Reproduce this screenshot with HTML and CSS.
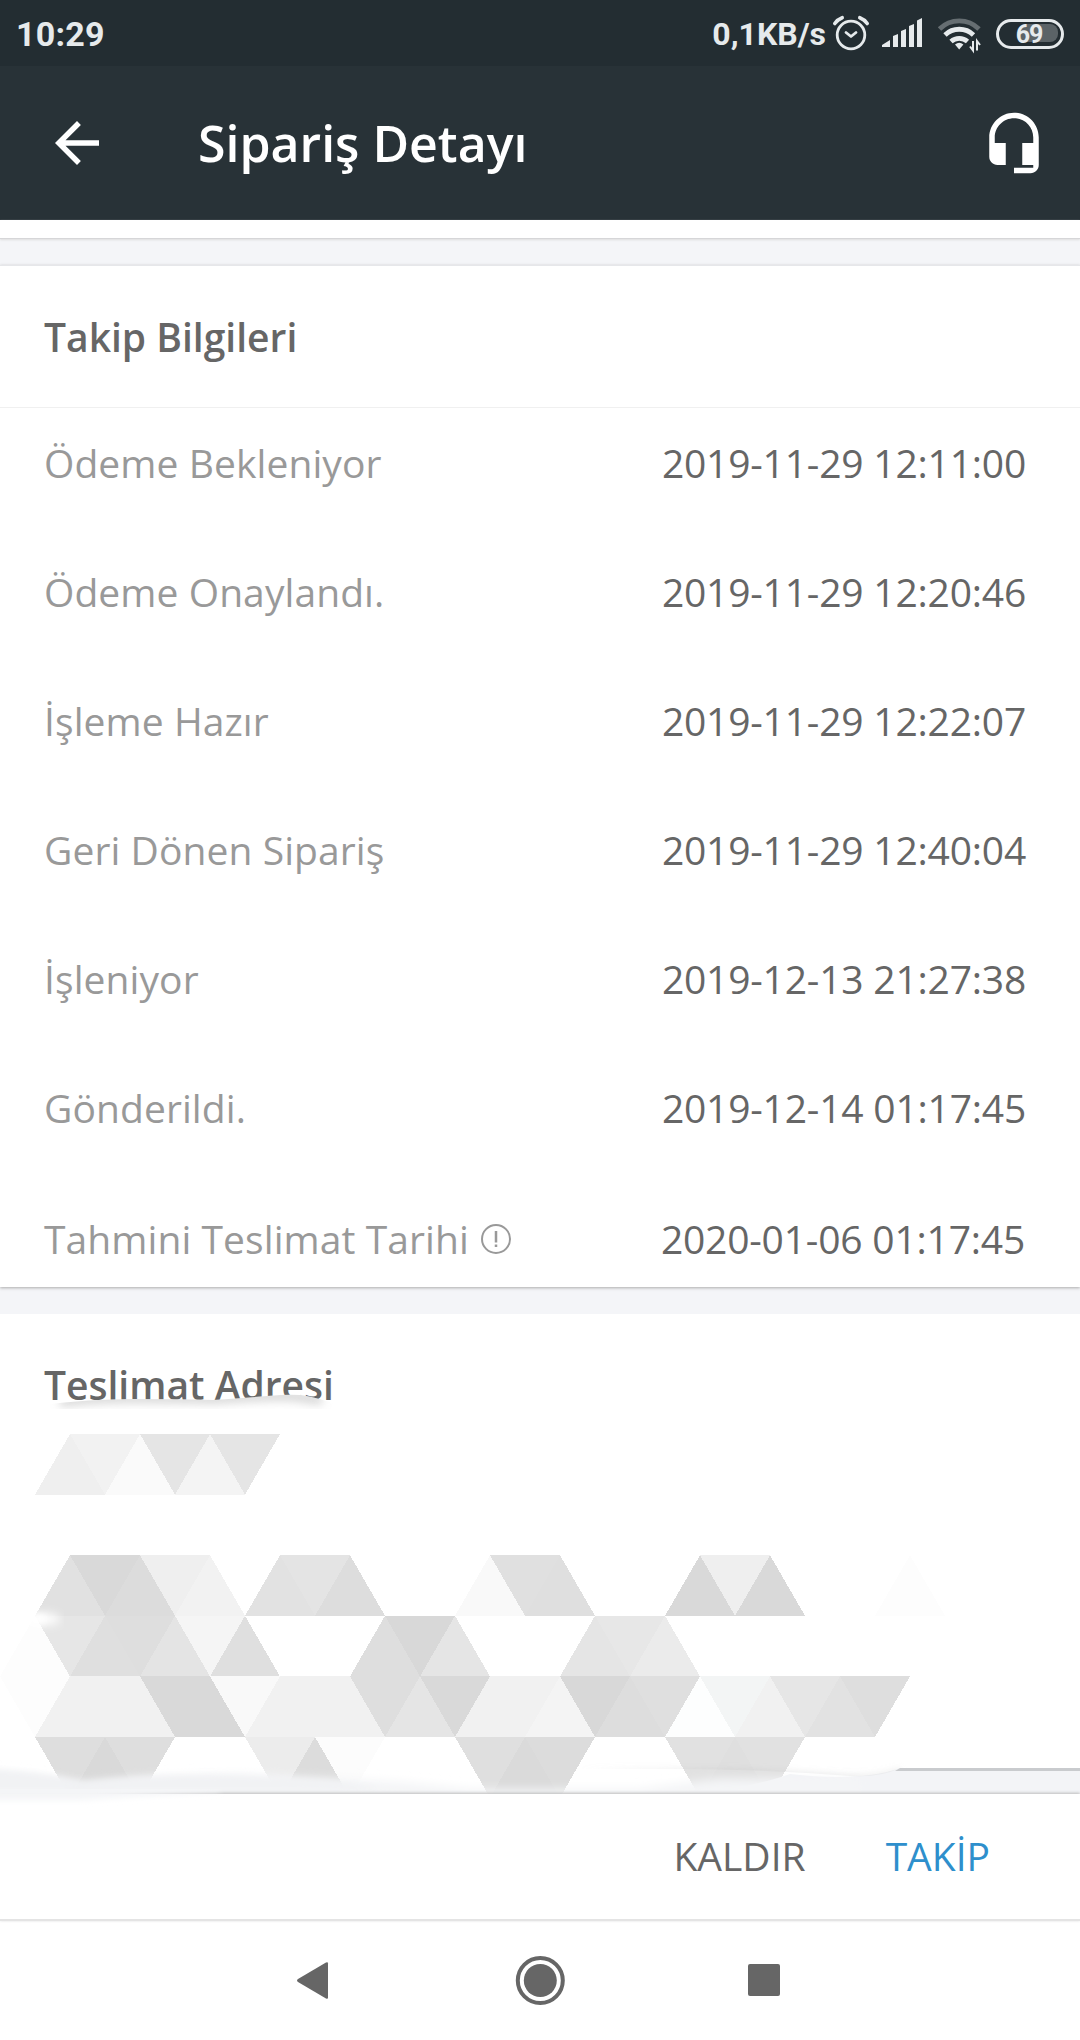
FILE: index.html
```html
<!DOCTYPE html>
<html lang="tr">
  <head>
    <meta charset="UTF-8" />
    <meta name="viewport" content="width=device-width, initial-scale=1.0" />
    <title>Sipariş Detayı</title>
    <link rel="stylesheet" href="styles.css">
  </head>
  <body>
    <div class="status">
      <span class="clock">10:29</span>
      <span class="speed">0,1KB/s</span>
      <svg class="status-icons" width="228" height="40" viewBox="832 14 228 40">
        <!-- alarm -->
        <g fill="none" stroke="#e6eaec" stroke-width="2.8" stroke-linecap="round">
          <circle cx="851" cy="35" r="13.8" />
          <path d="M846 32.5l5 4 5-4" stroke-linejoin="round" />
          <path d="M834.8 23.5q3-4.2 7.4-5.8M867.2 23.5q-3-4.2-7.4-5.8" stroke-width="3.6" />
        </g>
        <!-- signal -->
        <path fill="#e6eaec" d="M882 47v-2l8-5v7zM893 36l5-2v13h-5zM901 31l5-2v18h-5zM909 26l5-2v23h-5zM917 20.500l5-2.500v29h-5z" />
        <!-- wifi -->
        <g fill="none" stroke="#e6eaec" stroke-width="4.800">
          <path d="M939.500 29a28 28 0 0 1 39.500 0" stroke="#666e72" />
          <path d="M945 35a20.500 20.500 0 0 1 28.500 0" />
          <path d="M951 41.500a12.500 12.500 0 0 1 16.500 0" />
        </g>
        <path fill="#e6eaec" d="M955 44.500q4.200-3.500 8.400 0l-4.200 5z" />
        <path d="M973 41v9.500l-3-4M977 50.500V41l3 4" fill="none" stroke="#e6eaec" stroke-width="2" />
        <!-- battery -->
        <rect x="1019" y="24" width="39" height="18" rx="8" fill="#5b6367" />
      </svg>
      <span class="battery">69</span>
    </div>

    <header class="toolbar">
      <svg width="66" height="66" viewBox="0 0 24 24">
        <path fill="#fff" d="M20 11H7.830l5.590-5.590L12 4l-8 8 8 8 1.410-1.410L7.830 13H20v-2z" />
      </svg>
      <h1>Sipariş Detayı</h1>
      <svg width="66" height="66" viewBox="0 0 24 24">
        <path fill="#fff" d="M12 1c-4.970 0-9 4.030-9 9v7c0 1.660 1.340 3 3 3h3v-8H5v-2c0-3.870 3.130-7 7-7s7 3.130 7 7v2h-4v8h4v1h-7v2h6c1.660 0 3-1.340 3-3V10c0-4.970-4.030-9-9-9z" />
      </svg>
    </header>

    <div class="card-end"></div>

    <section class="card tracking">
      <h2>Takip Bilgileri</h2>
      <ul>
        <li><span>Ödeme Bekleniyor</span><time>2019-11-29 12:11:00</time></li>
        <li><span>Ödeme Onaylandı.</span><time>2019-11-29 12:20:46</time></li>
        <li><span>İşleme Hazır</span><time>2019-11-29 12:22:07</time></li>
        <li><span>Geri Dönen Sipariş</span><time>2019-11-29 12:40:04</time></li>
        <li><span>İşleniyor</span><time>2019-12-13 21:27:38</time></li>
        <li><span>Gönderildi.</span><time>2019-12-14 01:17:45</time></li>
        <li class="estimate">
          <span>Tahmini Teslimat Tarihi</span>
          <svg width="30" height="30" viewBox="0 0 30 30">
            <circle cx="15" cy="15" r="14" fill="none" stroke="#999" stroke-width="2" />
            <path d="M15 7v11.500M15 20.500v2.500" stroke="#999" stroke-width="2.500" />
          </svg>
          <time>2020-01-06 01:17:45</time>
        </li>
      </ul>
    </section>

    <section class="address">
      <h2>Teslimat Adresi</h2>
      <svg class="mosaic" width="1080" height="480" viewBox="0 1314 1080 480">
        <defs>
          <filter id="soft" x="-10%" y="-100%" width="120%" height="300%"><feGaussianBlur stdDeviation="5" /></filter>
          <filter id="haze" x="-10%" y="-100%" width="120%" height="300%"><feGaussianBlur stdDeviation="3" /></filter>
          <clipPath id="tear"><path d="M40 1405Q90 1399 133 1399T213 1400Q245 1398 267 1396T300 1395T336 1404V1430H40z" /></clipPath>
          <clipPath id="lip"><path d="M540 1740H1080V1768H900Q880 1778 850 1776Q760 1769 680 1769T540 1769z" /></clipPath>
          <linearGradient id="fade" gradientUnits="userSpaceOnUse" x1="580" x2="905" y1="0" y2="0">
            <stop offset="0" stop-color="#bbb" stop-opacity="0" />
            <stop offset="0.5" stop-color="#bbb" stop-opacity="0.45" />
            <stop offset="1" stop-color="#ccc" stop-opacity="0.4" />
          </linearGradient>
        </defs>
        <!-- torn edge under the heading -->
        <g clip-path="url(#tear)">
          <rect x="40" y="1390" width="300" height="40" fill="#fff" />
          <path fill="none" stroke="#a8a8a8" stroke-width="9" stroke-opacity="0.5" filter="url(#soft)" d="M60 1402Q90 1398 133 1398T213 1399Q245 1397 267 1396T300 1397T322 1400" />
        </g>
        <g id="tiles" shape-rendering="crispEdges"></g>
        <ellipse cx="43" cy="1619" rx="17" ry="6" fill="#fff" filter="url(#soft)" />
        <ellipse cx="38" cy="1619" rx="8" ry="5" fill="#fff" filter="url(#haze)" />
        <!-- worn lower edge of the card -->
        <path fill="#f3f4f7" d="M900 1768H1080V1794H700Q760 1785 790 1774Q860 1782 900 1768z" />
        <path fill="#f4f5f7" filter="url(#soft)" d="M-60 1769Q30 1771 75 1784Q150 1774 240 1774L400 1782L470 1789H640L720 1778L860 1779V1810H-60z" />
        <path fill="#f1f2f4" filter="url(#haze)" d="M-60 1768Q40 1770 85 1782Q170 1773 260 1777T380 1790H-60z" />
        <g clip-path="url(#lip)">
          <path fill="none" stroke="url(#fade)" stroke-width="4" filter="url(#haze)" d="M580 1771Q760 1770 850 1777Q880 1778 900 1770" />
        </g>
        <path fill="#c9cbce" d="M900 1768H1080V1771H895z" />
      </svg>
    </section>

    <footer class="actions">
      <svg class="smudge" width="260" height="30">
        <path fill="#fff" filter="url(#haze)" d="M-20 14H130L215 10V18H-20z" />
        <path fill="#f4f5f7" filter="url(#haze)" d="M-20-10H220V2L140 7L80 11H-20z" />
      </svg>
      <a>KALDIR</a>
      <a class="primary">TAKİP</a>
    </footer>

    <nav class="navbar">
      <svg width="1080" height="119" viewBox="0 1921 1080 119" fill="#666">
        <path d="M298 1979l28-16.500q2-1 2 1v34q0 2-2 1l-28-16.500q-2-1.500 0-3z" />
        <circle cx="540.300" cy="1980.500" r="16.500" />
        <circle cx="540.300" cy="1980.500" r="22.500" fill="none" stroke="#666" stroke-width="4" />
        <rect x="748" y="1964" width="32" height="32" rx="2" />
      </svg>
    </nav>

    <script src="mosaic.js"></script>
  </body>
</html>
```
FILE: mosaic.js
```js
const SIDE = 35;
const ROW = 60.6;

// [row, column, shade]; a triangle spans two columns
const tiles = [
  [0, 1, "#efefef"], [0, 2, "#f2f2f2"], [0, 3, "#fafafa"], [0, 4, "#e5e5e5"], [0, 5, "#f4f4f4"], [0, 6, "#e5e5e5"],
  [2, 1, "#e1e1e1"], [2, 2, "#d9d9d9"], [2, 3, "#dcdcdc"], [2, 4, "#efefef"], [2, 5, "#f2f2f2"],
  [2, 7, "#e2e2e2"], [2, 8, "#e4e4e4"], [2, 9, "#dddddd"],
  [2, 13, "#f9f9f9"], [2, 14, "#e0e0e0"], [2, 15, "#dfdfdf"],
  [2, 19, "#d9d9d9"], [2, 20, "#efefef"], [2, 21, "#d9d9d9"], [2, 25, "#fdfdfd"],
  [3, 0, "#fdfdfd"], [3, 1, "#e6e6e6"], [3, 2, "#dfdfdf"], [3, 3, "#dedede"], [3, 4, "#e4e4e4"], [3, 5, "#f5f5f5"], [3, 6, "#dfdfdf"],
  [3, 10, "#dedede"], [3, 11, "#d8d8d8"], [3, 12, "#e5e5e5"],
  [3, 16, "#e5e5e5"], [3, 17, "#e7e7e7"], [3, 18, "#ebebeb"],
  [4, 0, "#fdfdfd"], [4, 1, "#f1f1f1"], [4, 2, "#f1f1f1"], [4, 3, "#f1f1f1"], [4, 4, "#d9d9d9"], [4, 5, "#d9d9d9"],
  [4, 6, "#f9f9f9"], [4, 7, "#f1f1f1"], [4, 8, "#f1f1f1"], [4, 9, "#f1f1f1"],
  [4, 10, "#dedede"], [4, 11, "#e5e5e5"], [4, 12, "#d9d9d9"],
  [4, 13, "#f1f1f1"], [4, 14, "#f1f1f1"], [4, 15, "#f4f4f4"],
  [4, 16, "#d8d8d8"], [4, 17, "#dddddd"], [4, 18, "#dfdfdf"],
  [4, 19, "#fdfefe"], [4, 20, "#f3f5f5"], [4, 21, "#f1f1f1"], [4, 22, "#e6e6e6"], [4, 23, "#e2e2e2"], [4, 24, "#dedede"],
  [5, 1, "#dedede"], [5, 2, "#d9d9d9"], [5, 3, "#dedede"],
  [5, 7, "#ececec"], [5, 8, "#dcdcdc"], [5, 9, "#fcfcfc"],
  [5, 13, "#dfdfdf"], [5, 14, "#dadada"], [5, 15, "#dcdcdc"],
  [5, 19, "#e1e1e1"], [5, 20, "#dfdfdf"], [5, 21, "#e1e1e1"],
];

const group = document.getElementById("tiles");

for (const [row, col, shade] of tiles) {
  const up = (row + col) % 2 === 1;
  const top = 1434 + row * ROW;
  const base = up ? top + ROW : top;
  const tip = up ? top : top + ROW;
  const x = col * SIDE;

  const tile = document.createElementNS("http://www.w3.org/2000/svg", "polygon");
  tile.setAttribute("points", `${x},${base} ${x + SIDE},${tip} ${x + 2 * SIDE},${base}`);
  tile.setAttribute("fill", shade);
  group.appendChild(tile);
}
```
FILE: styles.css
```css
* {
  box-sizing: border-box;
}

body {
  background: #f4f5f8;
  color: #666;
  font-family: "Open Sans", "Noto Sans", sans-serif;
  font-size: 39px;
  margin: 0;
  width: 1080px;
}

svg {
  display: block;
  flex: none;
}

h1,
h2 {
  font-weight: 600;
  margin: 0;
}

h2 {
  font-size: 39px;
}

.status {
  align-items: center;
  background: #232d32;
  color: #e6eaec;
  display: flex;
  font-family: Roboto, sans-serif;
  font-size: 32px;
  font-weight: 700;
  height: 66px;
  padding: 1px 16px 0 16px;
}

.clock {
  font-size: 34px;
  letter-spacing: 0.2px;
}

.speed {
  margin-left: auto;
}

.status-icons {
  margin: 0 -64px 0 6px;
}

.battery {
  border: 3px solid #e6eaec;
  border-radius: 15px;
  font-size: 25px;
  height: 30px;
  letter-spacing: -1px;
  line-height: 25px;
  padding-right: 2px;
  position: relative;
  text-align: center;
  width: 68px;
}

.toolbar {
  align-items: center;
  background: #283237;
  color: #fff;
  display: flex;
  height: 154px;
  padding: 0 33px 0 44px;
}

.toolbar h1 {
  flex: 1;
  font-size: 50px;
  line-height: 68px;
  margin-left: 88px;
}

.card-end {
  background: #fff;
  border-bottom: 1px solid #d6d6d8;
  box-shadow: 0 1px 2px #ddd;
  height: 19px;
  margin-bottom: 26px;
}

.card {
  background: #fff;
  border-top: 1px solid #e6e7ea;
  box-shadow: 0 1px 3px #aaa;
  height: 1022px;
}

.card h2 {
  border-bottom: 1px solid #f0f0f0;
  height: 142px;
  line-height: 141px;
  padding-left: 44px;
}

.tracking ul {
  display: grid;
  gap: 74px;
  line-height: 55px;
  list-style: none;
  margin: 0;
  padding: 27px 54px 0 44px;
}

.tracking li {
  align-items: center;
  color: #999;
  display: flex;
  letter-spacing: 0.08px;
}

.tracking time {
  color: #666;
  letter-spacing: -0.2px;
  margin-left: auto;
}

.tracking .estimate {
  padding: 2px 1px 0 0;
}

.estimate svg {
  margin-left: 12px;
}

.address {
  background: #fff;
  height: 480px;
  margin-top: 27px;
  position: relative;
}

.address h2 {
  line-height: 142px;
  padding-left: 44px;
}

.mosaic {
  left: 0;
  position: absolute;
  top: 0;
}

.actions {
  background: #fff;
  border-bottom: 2px solid #e4e4e4;
  box-shadow: 0 -1px 3px #bbb;
  display: flex;
  gap: 80px;
  height: 127px;
  justify-content: flex-end;
  line-height: 124px;
  padding-right: 90px;
  position: relative;
}

.smudge {
  left: 0;
  position: absolute;
  top: -5px;
}

.primary {
  color: #2e8fcc;
}

.navbar {
  background: #fff;
  height: 119px;
}
```
